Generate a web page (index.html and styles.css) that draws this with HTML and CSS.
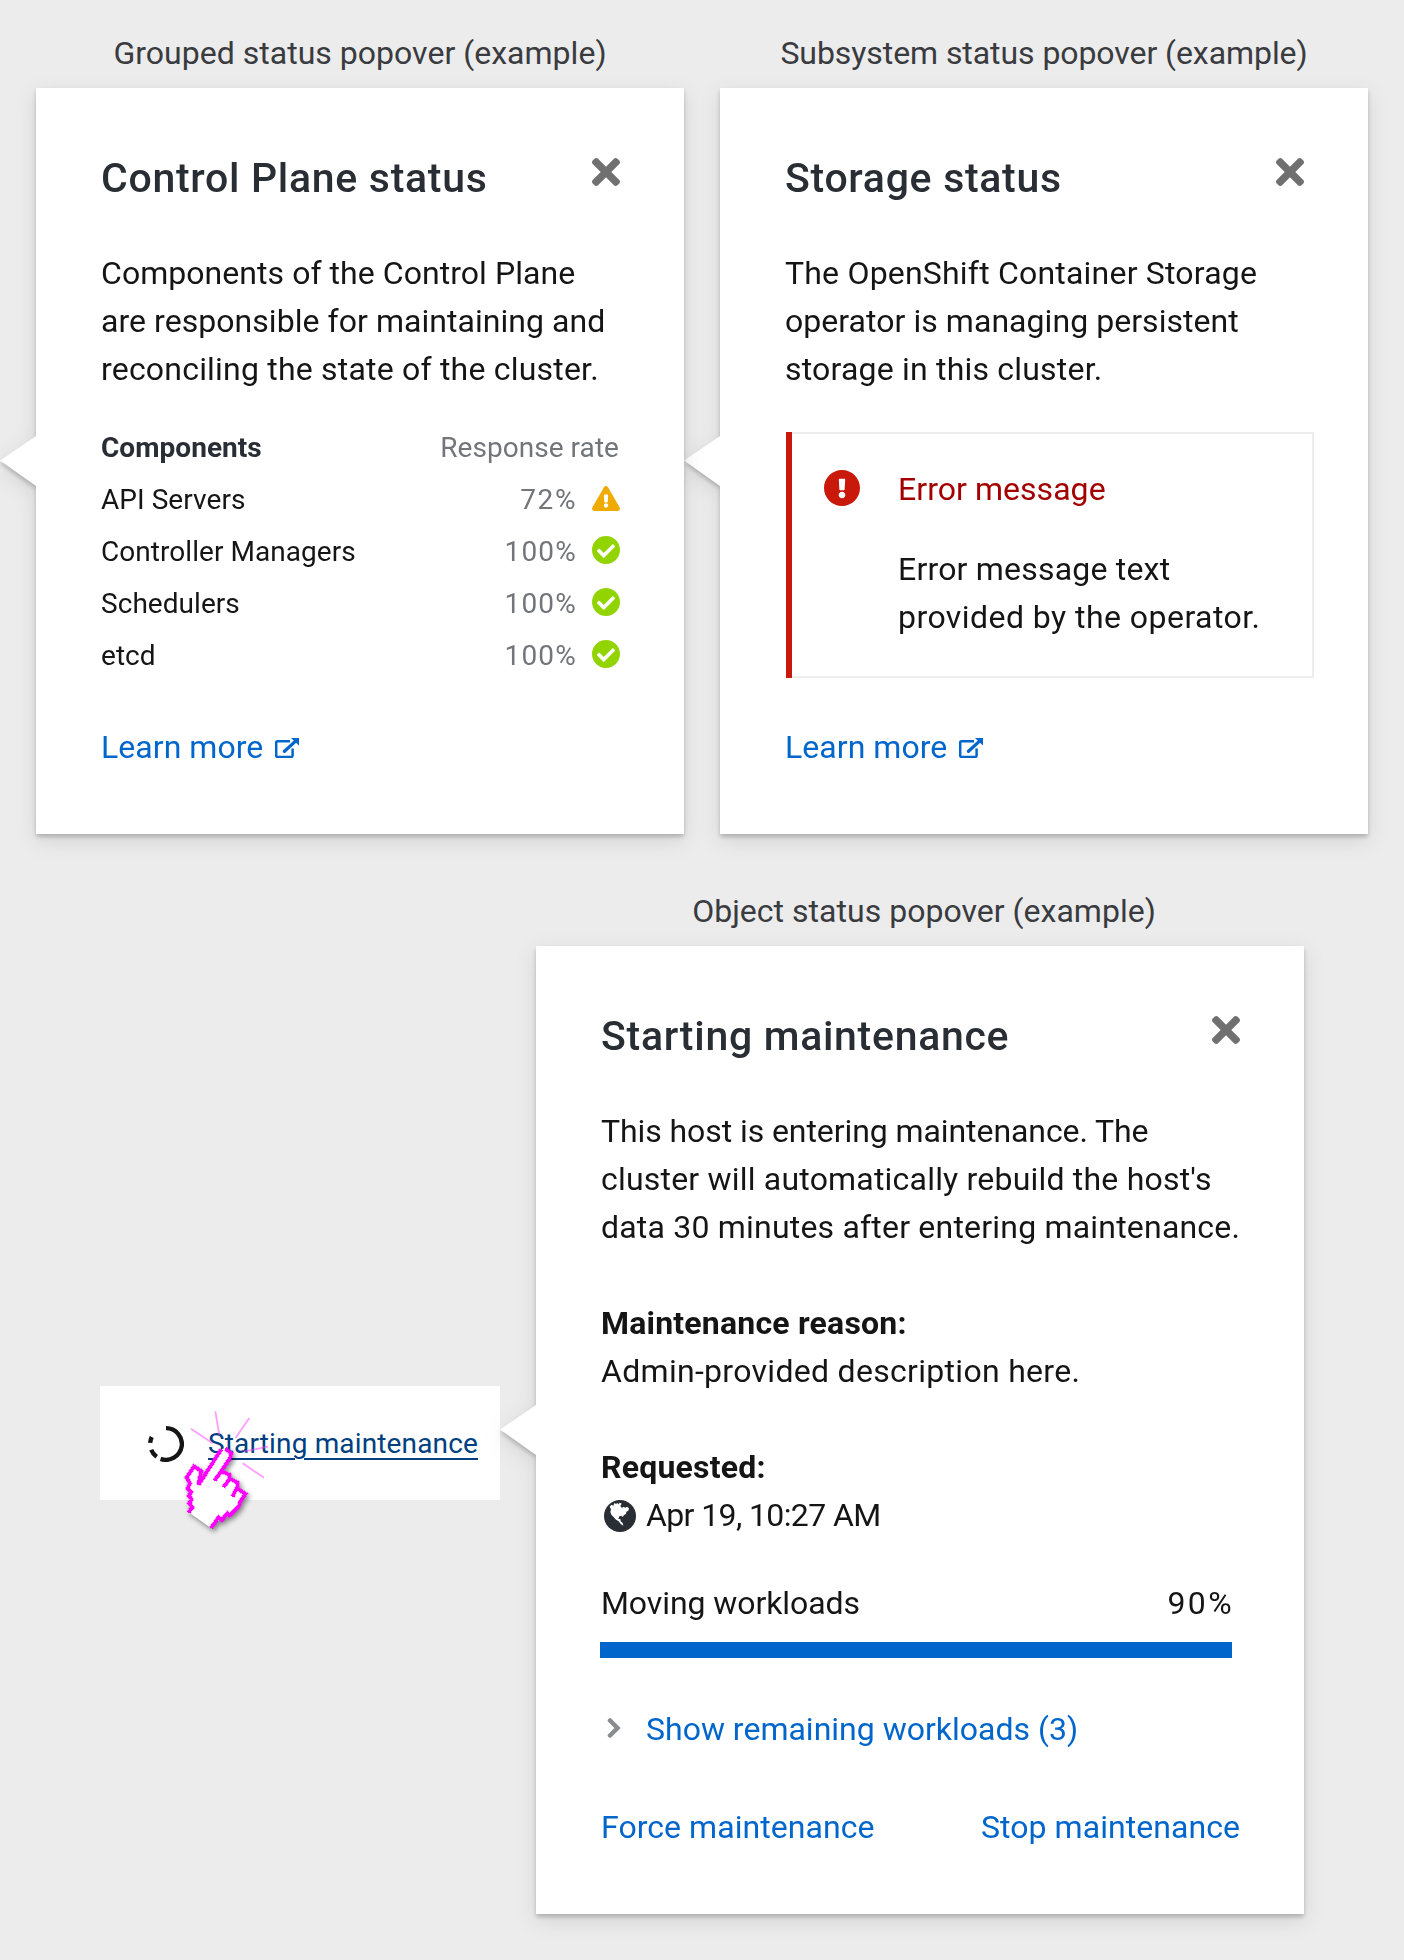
FILE: index.html
```html
<!DOCTYPE html>
<html lang="en">
<head>
<meta charset="utf-8">
<title>Status popovers</title>
<link rel="stylesheet" href="styles.css">
</head>
<body>
<svg class="sprite" aria-hidden="true">
  <symbol id="times" viewBox="0 80 352 352"><path d="M242.72 256l100.07-100.07c12.28-12.28 12.28-32.19 0-44.48l-22.24-22.24c-12.28-12.28-32.19-12.28-44.48 0L176 189.28 75.93 89.21c-12.28-12.28-32.19-12.28-44.48 0L9.21 111.45c-12.28 12.28-12.28 32.19 0 44.48L109.28 256 9.21 356.07c-12.28 12.28-12.28 32.19 0 44.48l22.24 22.24c12.28 12.28 32.2 12.28 44.48 0L176 322.72l100.07 100.07c12.28 12.28 32.2 12.28 44.48 0l22.24-22.24c12.28-12.28 12.28-32.19 0-44.48L242.72 256z"/></symbol>
  <symbol id="check" viewBox="8 8 496 496"><path d="M504 256c0 136.967-111.033 248-248 248S8 392.967 8 256 119.033 8 256 8s248 111.033 248 248zM227.314 387.314l184-184c6.248-6.248 6.248-16.379 0-22.627l-22.627-22.627c-6.248-6.249-16.379-6.249-22.628 0L216 308.118l-70.059-70.059c-6.248-6.248-16.379-6.248-22.628 0l-22.627 22.627c-6.248 6.248-6.248 16.379 0 22.627l104 104c6.249 6.249 16.379 6.249 22.628.001z"/></symbol>
  <symbol id="external" viewBox="0 0 24 20"><path d="M15 3.200H2.500Q1.200 3.200 1.200 4.500V17.600Q1.200 18.900 2.500 18.900H16.300Q17.600 18.900 17.600 17.600V10.500" fill="none" stroke="currentColor" stroke-width="2.500"/><path d="M9.500 13.300L20 3.600" fill="none" stroke="currentColor" stroke-width="3.300" stroke-linecap="round"/><path d="M16 0H24V7.600Z"/></symbol>
</svg>
<main class="page">
  <section class="row row-top">
    <div class="column">
      <p class="label">Grouped status popover (example)</p>
      <article class="card card-small card-front">
        <svg class="arrow arrow-small" viewBox="0 0 37 50"><path d="M37 0H36L0 24.500L36 50H37Z"/></svg>
        <header class="head"><h2 class="title">Control Plane status</h2><svg class="close"><use href="#times"/></svg></header>
        <p class="text"><span class="line">Components of the Control Plane</span><span class="line">are responsible for maintaining and</span><span class="line wide">reconciling the state of the cluster.</span></p>
        <div class="table">
          <div class="tr"><span class="th">Components</span><span class="rate-head">Response rate</span></div>
          <div class="tr"><span>API Servers</span><span class="rate rate-two">72%</span><svg class="status warn" viewBox="0 0 576 512"><path d="M569.517 440.013C587.975 472.007 564.806 512 527.940 512H48.054c-36.937 0-59.999-40.055-41.577-71.987L246.423 23.985c18.467-32.009 64.720-31.951 83.154 0l239.940 416.028zM288 354c-25.405 0-46 20.595-46 46s20.595 46 46 46 46-20.595 46-46-20.595-46-46-46zm-43.673-165.346l7.418 136c.347 6.364 5.609 11.346 11.982 11.346h48.546c6.373 0 11.635-4.982 11.982-11.346l7.418-136c.375-6.874-5.098-12.654-11.982-12.654h-63.383c-6.884 0-12.356 5.780-11.981 12.654z"/></svg></div>
          <div class="tr"><span>Controller Managers</span><span class="rate">100%</span><svg class="status ok"><use href="#check"/></svg></div>
          <div class="tr"><span>Schedulers</span><span class="rate">100%</span><svg class="status ok"><use href="#check"/></svg></div>
          <div class="tr"><span>etcd</span><span class="rate">100%</span><svg class="status ok"><use href="#check"/></svg></div>
        </div>
        <a class="link learn">Learn more<svg class="external"><use href="#external"/></svg></a>
      </article>
    </div>
    <div class="column">
      <p class="label label-sub">Subsystem status popover (example)</p>
      <article class="card card-small">
        <svg class="arrow arrow-small" viewBox="0 0 37 50"><path d="M37 0H36L0 24.500L36 50H37Z"/></svg>
        <header class="head"><h2 class="title">Storage status</h2><svg class="close"><use href="#times"/></svg></header>
        <p class="text"><span class="line wide">The OpenShift Container Storage</span><span class="line">operator is managing persistent</span><span class="line wide">storage in this cluster.</span></p>
        <div class="alert">
          <svg class="alert-icon" viewBox="8 8 496 496"><path d="M504 256c0 136.997-111.043 248-248 248S8 392.997 8 256C8 119.083 119.043 8 256 8s248 111.083 248 248zm-248 50c-25.405 0-46 20.595-46 46s20.595 46 46 46 46-20.595 46-46-20.595-46-46-46zm-43.673-165.346l7.418 136c.347 6.364 5.609 11.346 11.982 11.346h48.546c6.373 0 11.635-4.982 11.982-11.346l7.418-136c.375-6.874-5.098-12.654-11.982-12.654h-63.383c-6.884 0-12.356 5.780-11.981 12.654z"/></svg>
          <div>
            <h3 class="alert-title">Error message</h3>
            <p class="alert-text"><span class="line wide">Error message text</span><span class="line wider">provided by the operator.</span></p>
          </div>
        </div>
        <a class="link learn">Learn more<svg class="external"><use href="#external"/></svg></a>
      </article>
    </div>
  </section>
  <section class="row row-bottom">
    <div class="trigger">
      <svg class="spinner" viewBox="24 77 108 108"><path d="M78 83.500A47.500 47.500 0 1 1 61.800 175.600M50.100 169.400A47.500 47.500 0 0 1 33.600 148M30.600 127.700A47.500 47.500 0 0 1 35.300 110.200" fill="none" stroke="#151515" stroke-width="13"/></svg>
      <a class="trigger-link">Starting maintenance</a>
      <svg class="pointer" viewBox="0 0 420 420">
        <g stroke="#ff40ff" stroke-opacity=".5" stroke-width="5.500"><path d="M153 86L218 130M226 34L238 105M328 54L287 113M310 155L384 140M308 190L372 233"/></g>
        <g class="hand">
          <path fill="#fff" d="M148 338L155 322L147 300L152 280L142 264L150 246L140 232L162 200L184 214L178 248L244 148L258 143L276 164L248 212L270 222L270 234L292 246L294 262L316 280L296 318L268 348L246 352L213 384Z"/>
          <path class="hand-edge soft" d="M146 338L157 322L148 310L155 298L147 288L153 276L143 266L150 250L140 232L162 199L184 214L178 238L176 254L244 148M256 146L274 160L268 178L224 242M244 214L268 224L270 236L250 262M270 236L292 248L292 260L278 290M292 266L316 282L300 306L296 320L268 346L262 340L246 360L236 352L213 384"/>
          <path class="hand-edge" d="M146 338L157 322L148 310L155 298L147 288L153 276L143 266L150 250L140 232L162 199L184 214L178 238L176 254L244 148M256 146L274 160L268 178L224 242M244 214L268 224L270 236L250 262M270 236L292 248L292 260L278 290M292 266L316 282L300 306L296 320L268 346L262 340L246 360L236 352L213 384"/>
        </g>
      </svg>
    </div>
    <div class="column">
      <p class="label label-object">Object status popover (example)</p>
      <article class="card card-large">
        <svg class="arrow arrow-large" viewBox="0 0 37 50"><path d="M37 0H36L0 24.500L36 50H37Z"/></svg>
        <header class="head"><h2 class="title">Starting maintenance</h2><svg class="close"><use href="#times"/></svg></header>
        <p class="text"><span class="line flat">This host is entering maintenance. The</span><span class="line wide">cluster will automatically rebuild the host's</span><span class="line wide">data 30 minutes after entering maintenance.</span></p>
        <dl class="facts">
          <dt>Maintenance reason:</dt>
          <dd class="reason">Admin-provided description here.</dd>
          <dt>Requested:</dt>
          <dd class="when"><svg class="globe" viewBox="0 0 96 96"><circle cx="48" cy="48" r="48" fill="#292e34"/><path fill="#fff" d="M17 20L22 14L28 17L31 9L36 12L40 9L43 13L47 8L53 11L49 18L54 24L58 20L64 23L69 20L75 25L73 32L67 35L66 42L60 45L56 51L52 47L46 49L43 57L49 57L50 64L56 69L58 77L51 73L43 63L36 59L28 50L22 44L19 36L21 28Z"/></svg><span>Apr 19, 10:27 AM</span></dd>
        </dl>
        <div class="progress-head"><span class="flat">Moving workloads</span><span class="percent">90%</span></div>
        <div class="progress"></div>
        <a class="link expand"><svg class="chevron" viewBox="0 0 14 20"><path d="M3 2.500L10.500 10L3 17.500" fill="none" stroke="#8a8d90" stroke-width="4.500" stroke-linecap="round"/></svg><span>Show remaining workloads (3)</span></a>
        <footer class="actions"><a class="link">Force maintenance</a><a class="link">Stop maintenance</a></footer>
      </article>
    </div>
  </section>
</main>
</body>
</html>
```
FILE: styles.css
```css
* { box-sizing: border-box; }
body {
  margin: 0;
  background: #ececec;
  color: #151515;
  font: 400 32px/48px Roboto, "Liberation Sans", sans-serif;
  letter-spacing: .05px;
}
h2, h3, p, dl, dd { margin: 0; font-weight: 400; }
svg { display: block; flex: none; fill: currentColor; }
.sprite { position: absolute; width: 0; height: 0; }
.page { width: 1404px; height: 1960px; padding-top: 29px; overflow: hidden; }
.row { display: flex; gap: 36px; }
.row-top { padding-left: 36px; }
.row-bottom { padding-left: 100px; margin-top: 53px; align-items: flex-start; }
.column { display: flex; flex-direction: column; gap: 11px; }
.label { text-align: center; color: #393b3f; letter-spacing: .02px; }
.label-sub { letter-spacing: -.07px; }
.label-object { padding-left: 8px; }
.card {
  position: relative;
  background: #fff;
  padding: 66px 64px 0 65px;
  filter: drop-shadow(0 3px 2px rgba(0, 0, 0, .2)) drop-shadow(0 6px 10px rgba(0, 0, 0, .1));
}
.card-front { z-index: 1; }
.card-small { width: 648px; height: 746px; }
.card-large { width: 768px; height: 968px; }
.arrow { position: absolute; left: -36px; width: 37px; height: 50px; fill: #fff; }
.arrow-small { top: 348px; }
.arrow-large { top: 459px; }
.head { display: flex; justify-content: space-between; }
.title { font-size: 41px; font-weight: 500; letter-spacing: .7px; color: #292e34; }
.close { width: 28px; height: 28px; margin-top: 4px; color: #707070; }
.text { margin-top: 47px; }
.line { display: block; white-space: nowrap; }
.flat { letter-spacing: -.08px; }
.wide { letter-spacing: .2px; }
.wider { letter-spacing: .45px; }

.table { margin-top: 29px; font-size: 28px; line-height: 52px; }
.tr { display: flex; align-items: center; height: 52px; }
.tr > :first-child { flex: 1; }
.th { font-weight: 700; color: #292e34; }
.rate-head, .rate { color: #72767b; }
.rate-head { margin-right: 1px; }
.rate { letter-spacing: 1.2px; margin-right: 15px; }
.rate-two { letter-spacing: 1.6px; margin-right: 15px; }
.status { width: 28px; height: 28px; margin-top: -4px; }
.warn { height: 25px; }
.warn { color: #f0ab00; }
.ok { color: #92d400; }

.link { color: #06c; }
.learn { display: flex; margin-top: 41px; }
.external { width: 24px; height: 20px; margin: 15px 0 0 12px; }
.alert {
  display: flex;
  gap: 38px;
  width: 522px;
  height: 246px;
  margin: 39px 0 45px 7px;
  padding: 31px 0 0 32px;
  border: 2px solid #ededed;
  border-left: 0;
  box-shadow: -6px 0 0 #c9190b;
}
.alert-icon { width: 36px; height: 36px; margin-top: 5px; color: #c9190b; }
.alert-title { font-size: 32px; color: #a30000; }
.alert-text { margin-top: 32px; }
.alert + .learn { margin-top: 0; }

.facts { margin-top: 48px; }
dt { font-weight: 700; letter-spacing: .2px; }
.reason { letter-spacing: .3px; margin-bottom: 48px; }
.when { display: flex; gap: 10px; letter-spacing: -.61px; }
.globe { width: 32px; height: 32px; margin: 9px 0 0 3px; }
.progress-head { display: flex; justify-content: space-between; margin-top: 40px; width: 631px; }
.percent { letter-spacing: 2.4px; margin-right: -2px; }
.progress { width: 632px; height: 16px; margin: 15px 0 0 -1px; background: #06c; }
.expand { display: flex; margin-top: 47px; letter-spacing: 0; }
.chevron { width: 14px; height: 20px; margin: 13px 25px 0 6px; }
.actions { display: flex; justify-content: space-between; margin-top: 50px; }

.trigger {
  position: relative;
  display: flex;
  width: 400px;
  height: 114px;
  margin-top: 499px;
  padding: 40px 0 0 48px;
  background: #fff;
}
.spinner { width: 36px; height: 36px; }
.trigger-link {
  margin: -6px 0 0 24px;
  font-size: 28px;
  letter-spacing: .15px;
  white-space: nowrap;
  color: #004080;
  text-decoration: underline;
  text-decoration-thickness: 2px;
  text-underline-offset: 5px;
}
.pointer { position: absolute; left: 40px; top: 14px; width: 140px; height: 140px; overflow: visible; }
.hand { filter: drop-shadow(6px 8px 8px rgba(0, 0, 0, .45)); }
.hand-edge { fill: none; stroke: #f0f; stroke-width: 10; shape-rendering: crispEdges; }
.soft { stroke-width: 15; stroke-opacity: .35; }
```
